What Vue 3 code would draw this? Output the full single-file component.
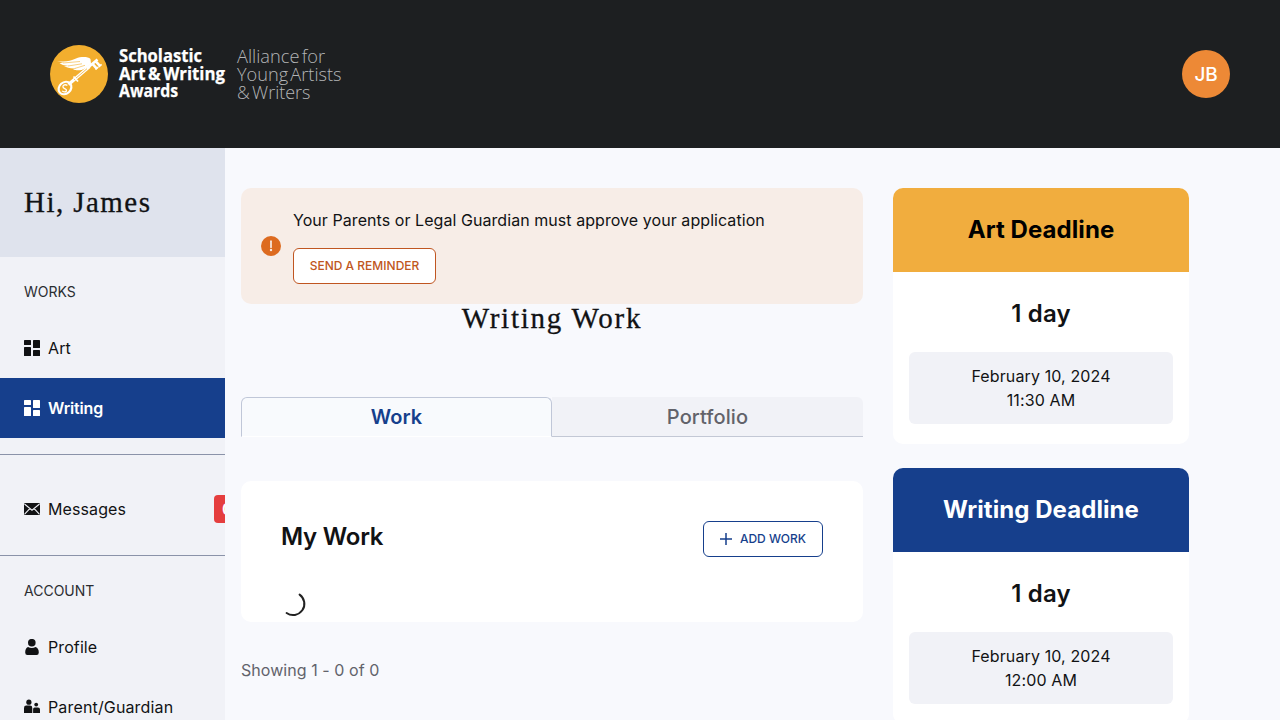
<script setup>
const brandLines = [
  { text: 'Scholastic', y: 27, width: 83 },
  { text: 'Art & Writing', y: 45, width: 106 },
  { text: 'Awards', y: 62.5, width: 59 },
]
const allianceLines = [
  { text: 'Alliance for', y: 28, width: 88 },
  { text: 'Young Artists', y: 46, width: 104.5 },
  { text: '& Writers', y: 64, width: 73.5 },
]
const deadlines = [
  { name: 'Art Deadline', kind: 'art', left: '1 day', date: 'February 10, 2024', time: '11:30 AM' },
  { name: 'Writing Deadline', kind: 'writing', left: '1 day', date: 'February 10, 2024', time: '12:00 AM' },
]
</script>

<template>
  <div class="page">
    <header class="topbar">
      <svg class="logo" width="300" height="76" viewBox="0 0 300 76">
        <circle cx="29" cy="39" r="29" fill="#f2ae2e" />
        <path d="M7 26C15 27.5 20 26 26 23.5C31 21.5 38 21.5 40.5 24L41 29L35 33.5C31 36 26 35.5 23 34.5L26 33.3C21 33.8 17 32.5 14 31.2L19 31C14 30.5 11 29.5 9.5 28L14 28Z" fill="#fff" />
        <path d="M13 28L30 26.5M18 31L32 28.8M25 33.4L35 30.3" stroke="#f2ae2e" stroke-width=".6" />
        <path d="M38 32.5L47.5 24.5M42.5 28.8L47 33.8M45.5 26.2L50.2 31.2" fill="none" stroke="#fff" stroke-width="2.6" />
        <path d="M45.5 34.5L48.3 32M48.8 32L51.6 29.4" stroke="#fff" stroke-width="1.6" />
        <path d="M39.5 31.5L18.5 49.5" stroke="#fff" stroke-width="3.2" />
        <path d="M37 33.7L24 44.8" stroke="#f2ae2e" stroke-width=".8" />
        <path d="M23.5 41.5L28 46.5" stroke="#fff" stroke-width="1.8" />
        <ellipse cx="15" cy="53" rx="6.9" ry="5.7" transform="rotate(-42 15 53)" fill="none" stroke="#fff" stroke-width="2.2" />
        <path d="M17.4 50.3C14.2 48.8 12 51 13.4 52.8C14.8 54.2 17.2 54 16.4 56C15.4 57.4 13.1 57 12.2 55.9" fill="none" stroke="#fff" stroke-width="1.3" />
        <text v-for="l in brandLines" :key="l.text" class="brand" x="69" :y="l.y - 0.5" :textLength="l.width" lengthAdjust="spacingAndGlyphs">{{ l.text }}</text>
        <text v-for="l in allianceLines" :key="l.text" class="alliance" x="187" :y="l.y - 0.5" :textLength="l.width" lengthAdjust="spacingAndGlyphs">{{ l.text }}</text>
      </svg>
      <div class="avatar">JB</div>
    </header>

    <div class="body">
      <aside class="sidebar">
        <div class="greeting"><span>Hi, James</span></div>
        <div class="section">WORKS</div>
        <a class="item">
          <svg width="16" height="16" viewBox="0 0 16 16" fill="currentColor"><rect width="7" height="5" rx=".6" /><rect y="7" width="7" height="9" rx=".6" /><rect x="9" width="7" height="8" rx=".6" /><rect x="9" y="10" width="7" height="6" rx=".6" /></svg>
          <span>Art</span>
        </a>
        <a class="item active">
          <svg width="16" height="16" viewBox="0 0 16 16" fill="currentColor"><rect width="7" height="5" rx=".6" /><rect y="7" width="7" height="9" rx=".6" /><rect x="9" width="7" height="8" rx=".6" /><rect x="9" y="10" width="7" height="6" rx=".6" /></svg>
          <span>Writing</span>
        </a>
        <div class="messages">
          <a class="item">
            <svg width="16" height="16" viewBox="0 0 16 16"><rect y="2" width="16" height="12" rx="1.2" fill="currentColor" /><path d="M.5 3L8 9.2L15.5 3M.7 13.2L5.8 7.6M15.3 13.2L10.2 7.6" fill="none" stroke="#f1f2f7" stroke-width="1.1" /></svg>
            <span>Messages</span>
            <b class="badge">0</b>
          </a>
        </div>
        <div class="section">ACCOUNT</div>
        <a class="item">
          <svg width="16" height="16" viewBox="0 0 16 16" fill="currentColor"><circle cx="7.8" cy="3.7" r="3.8" /><path d="M4 7.9Q7.8 10 11.6 7.9Q14.8 9 14.8 13.5Q14.8 16 12.6 16H3.4Q1.2 16 1.2 13.5Q1.2 9 4 7.9Z" /></svg>
          <span>Profile</span>
        </a>
        <a class="item">
          <svg width="16" height="16" viewBox="0 0 16 16" fill="currentColor"><circle cx="4.9" cy="3.2" r="2.6" /><circle cx="12.2" cy="5.6" r="1.9" /><path d="M0 14V9Q0 6.6 2.3 6.6H6Q8.3 6.6 8.3 9V14ZM9.1 14V9.9Q9.1 8.4 10.6 8.4H14Q16 8.4 16 10.4V14Z" /></svg>
          <span class="guardian">Parent/Guardian</span>
        </a>
      </aside>

      <main class="main">
        <div class="alert">
          <svg width="20" height="20" viewBox="0 0 20 20"><circle cx="10" cy="10" r="10" fill="#dd6b20" /><path d="M10 5.2V11.2" stroke="#f7ede7" stroke-width="1.7" stroke-linecap="round" /><circle cx="10" cy="14" r="1.2" fill="#f7ede7" /></svg>
          <div class="alert-body">
            <p>Your Parents or Legal Guardian must approve your application</p>
            <button class="remind">SEND A REMINDER</button>
          </div>
        </div>
        <h1><span>Writing Work</span></h1>
        <div class="tabs">
          <div class="tab selected">Work</div>
          <div class="tab">Portfolio</div>
        </div>
        <section class="work">
          <div class="work-head">
            <h2>My Work</h2>
            <button class="add">
              <svg width="12" height="12" viewBox="0 0 12 12"><path d="M6 0V12M0 6H12" stroke="currentColor" stroke-width="1.5" /></svg>
              <span>ADD WORK</span>
            </button>
          </div>
          <svg class="spinner" width="26" height="26" viewBox="0 0 26 26"><path d="M18.6 2.6A11.2 11.2 0 0 1 5.6 21" fill="none" stroke="#222" stroke-width="2" stroke-linecap="round" /></svg>
        </section>
        <p class="count">Showing 1 - 0 of 0</p>
      </main>

      <div class="deadlines">
        <section v-for="d in deadlines" :key="d.name" class="deadline">
          <h3 :class="d.kind">{{ d.name }}</h3>
          <div class="left">{{ d.left }}</div>
          <div class="when"><div>{{ d.date }}</div><div>{{ d.time }}</div></div>
        </section>
      </div>
    </div>
  </div>
</template>

<style>
body { margin: 0; overflow: hidden; }
</style>

<style scoped>
* { box-sizing: border-box; }
h1, h2, h3, p { margin: 0; }
.page { height: 720px; overflow: hidden; display: flex; flex-direction: column; background: #f8f9fd; font-family: Inter, sans-serif; font-size: 16px; line-height: 24px; color: #111214; }
.topbar { flex: none; height: 148px; background: #1d1f21; padding: 0 50px; display: flex; align-items: center; justify-content: space-between; }
.logo { display: block; margin-top: -2px; }
.brand { font: 700 18.5px "Open Sans", sans-serif; fill: #fff; stroke: #fff; stroke-width: .25px; word-spacing: -2px; }
.alliance { font: 300 18.5px "Open Sans", sans-serif; fill: #b4b6b8; word-spacing: -2.5px; }
.avatar { width: 48px; height: 48px; border-radius: 50%; background: #ed8936; color: #fff; font-size: 19px; font-weight: 550; letter-spacing: -.2px; line-height: 49px; text-align: center; }
.body { display: flex; flex: 1; min-height: 0; align-items: flex-start; }
.sidebar { flex: none; width: 225px; height: 572px; overflow: hidden; background: #f1f2f7; }
.greeting { height: 109px; background: #dfe3ed; padding: 0 24px; display: flex; align-items: center; font: 29px "Liberation Serif", serif; letter-spacing: 1.45px; white-space: nowrap; -webkit-text-stroke: .3px #111214; }
.section { height: 61px; padding: 23px 24px 0; font-size: 14px; color: #2b2d31; }
.item { height: 60px; padding-left: 24px; display: flex; align-items: center; gap: 8px; white-space: nowrap; letter-spacing: .1px; }
.guardian { letter-spacing: .15px; }
.item svg { flex: none; display: block; }
.active { background: #163f8c; color: #fff; font-weight: 600; letter-spacing: -.15px; }
.messages { margin-top: 16px; height: 102px; border-top: 1px solid #8b93a9; border-bottom: 1px solid #8b93a9; padding-top: 24px; }
.badge { flex: none; width: 26px; height: 28px; margin-left: 80px; border-radius: 4px; background: #e53e3e; color: #fff; font-size: 16px; font-weight: 600; line-height: 28px; padding-left: 8px; }
.main { flex: none; width: 622px; margin: 40px 30px 0 16px; }
.alert { height: 116px; border-radius: 10px; background: #f7ede7; padding: 20px; display: flex; align-items: center; gap: 12px; }
.alert-body p { margin-bottom: 16px; letter-spacing: .06px; }
button { display: flex; align-items: center; justify-content: center; background: #fff; height: 36px; border-radius: 6px; font: 500 12px Inter, sans-serif; padding: 0 0 1px; }
.remind { width: 143px; border: 1px solid #c05621; color: #c05621; }
h1 { height: 93px; text-align: center; font: 400 29px/29px "Liberation Serif", serif; letter-spacing: 1.75px; -webkit-text-stroke: .3px #111214; }
.tabs { display: flex; height: 40px; }
.tab { width: 50%; background: #f1f2f7; border-bottom: 1px solid #c3c8d5; border-top-right-radius: 6px; text-align: center; font-size: 20px; font-weight: 500; letter-spacing: .1px; line-height: 40px; color: #62636b; }
.selected { background: #f8fafd; border: 1px solid #c0c7d8; border-bottom-color: #fff; border-radius: 6px 6px 0 0; color: #163f8c; font-weight: 600; line-height: 38px; }
.work { margin-top: 44px; height: 141px; border-radius: 10px; background: #fff; padding: 40px 40px 0; }
.work-head { display: flex; justify-content: space-between; height: 71px; }
h2 { font-size: 24px; line-height: 32px; font-weight: 600; letter-spacing: -.25px; }
.add { width: 120px; border: 1px solid #163f8c; color: #163f8c; gap: 8px; }
.add svg { position: relative; top: .5px; }
.spinner { display: block; }
.count { margin-top: 36px; color: #62636b; letter-spacing: .06px; }
.deadlines { width: 296px; margin-top: 40px; display: flex; flex-direction: column; gap: 24px; }
.deadline { height: 256px; border-radius: 10px; overflow: hidden; background: #fff; text-align: center; }
h3 { height: 84px; font-size: 24px; line-height: 84px; font-weight: 700; letter-spacing: .07px; }
.art { background: #f1ad3e; color: #000; }
.writing { background: #163f8c; color: #fff; }
.left { height: 80px; font-size: 24px; font-weight: 600; line-height: 84px; letter-spacing: .2px; }
.when { margin: 0 16px; height: 72px; padding: 12px 0; border-radius: 6px; background: #f1f2f7; letter-spacing: .12px; }
</style>
